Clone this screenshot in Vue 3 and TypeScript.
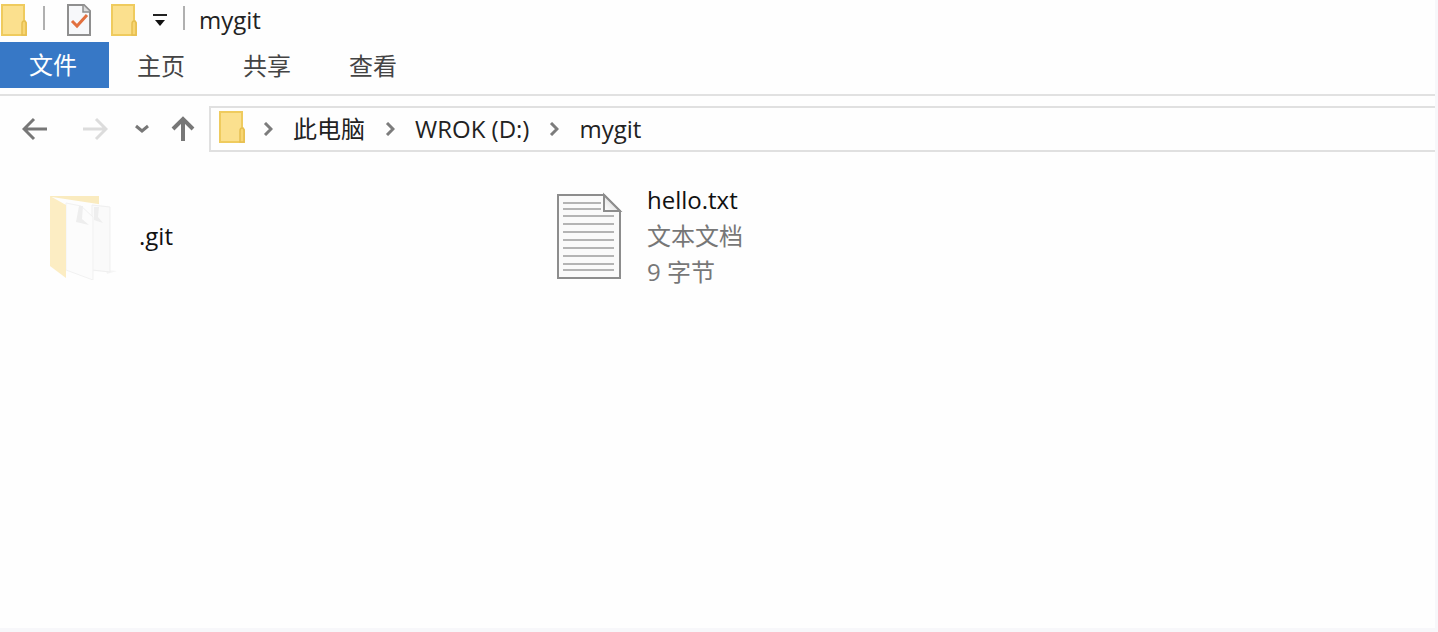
<script setup lang="ts">
const folderName: string = 'mygit'
const tabs: string[] = ['主页', '共享', '查看']
const crumbs: string[] = ['此电脑', 'WROK (D:)', folderName]
const docLines: number[] = [25, 33, 41, 49, 57, 65, 73].map((y) => y)
</script>

<template>
  <div class="window">
    <header class="titlebar">
      <svg class="folder" viewBox="0 0 28 34" aria-hidden="true">
        <path d="M2 2h22v15l2 3v12H2z" fill="#fbe08e" stroke="#efcb5e" stroke-width="2" />
        <path d="M22 32V21q0-3 2-3t2 3v11z" fill="#f8d672" stroke="#e6bf50" stroke-width="1.5" />
      </svg>
      <span class="bar bar-first"></span>
      <button class="tool" aria-label="属性">
        <svg width="26" height="34" viewBox="0 0 26 34">
          <path d="M2 2h16l6 6v24H2z" fill="#f7f8fa" stroke="#8f8f8f" stroke-width="2" />
          <path d="M17 2v7h7" fill="#dcdcdc" stroke="#8f8f8f" stroke-width="1.5" />
          <path d="M6 18l5 5 10-11" fill="none" stroke="#e2703f" stroke-width="3" />
        </svg>
      </button>
      <button class="tool new-folder" aria-label="新建文件夹">
        <svg class="folder" viewBox="0 0 28 34">
          <path d="M2 2h22v15l2 3v12H2z" fill="#fbe08e" stroke="#efcb5e" stroke-width="2" />
          <path d="M22 32V21q0-3 2-3t2 3v11z" fill="#f8d672" stroke="#e6bf50" stroke-width="1.5" />
        </svg>
      </button>
      <button class="tool customize" aria-label="自定义快速访问工具栏">
        <svg width="16" height="14" viewBox="0 0 16 14">
          <path d="M1 2h14" stroke="#222" stroke-width="2" />
          <path d="M3 7h10l-5 6z" fill="#111" />
        </svg>
      </button>
      <span class="bar bar-last"></span>
      <span class="title">{{ folderName }}</span>
    </header>

    <nav class="tabs">
      <button class="tab file-tab">文件</button>
      <button v-for="tab in tabs" :key="tab" class="tab">{{ tab }}</button>
    </nav>

    <div class="navigation">
      <div class="arrows">
        <button class="tool back" aria-label="后退">
          <svg width="26" height="24" viewBox="0 0 26 24" fill="none" stroke="#777" stroke-width="3">
            <path d="M25 12H3M12 2L2 12l10 10" />
          </svg>
        </button>
        <button class="tool forward" aria-label="前进" disabled>
          <svg width="26" height="24" viewBox="0 0 26 24" fill="none" stroke="#dcdcdc" stroke-width="3">
            <path d="M1 12h22M14 2l10 10-10 10" />
          </svg>
        </button>
        <button class="tool recent" aria-label="最近浏览的位置">
          <svg width="14" height="10" viewBox="0 0 14 10" fill="none" stroke="#777" stroke-width="3">
            <path d="M1 2l6 5 6-5" />
          </svg>
        </button>
        <button class="tool up" aria-label="上移">
          <svg width="24" height="26" viewBox="0 0 24 26" fill="none" stroke="#777" stroke-width="4">
            <path d="M12 25V3M2 13L12 3l10 10" />
          </svg>
        </button>
      </div>
      <div class="address">
        <svg class="folder" viewBox="0 0 28 34" aria-hidden="true">
          <path d="M2 2h22v15l2 3v12H2z" fill="#fbe08e" stroke="#efcb5e" stroke-width="2" />
          <path d="M22 32V21q0-3 2-3t2 3v11z" fill="#f8d672" stroke="#e6bf50" stroke-width="1.5" />
        </svg>
        <template v-for="crumb in crumbs" :key="crumb">
          <svg class="chevron" viewBox="0 0 10 14" fill="none" stroke="#7c7c7c" stroke-width="3">
            <path d="M2 1l6 6-6 6" />
          </svg>
          <button class="crumb">{{ crumb }}</button>
        </template>
      </div>
    </div>

    <main class="files">
      <article class="item">
        <svg class="icon" viewBox="0 0 72 88" aria-hidden="true">
          <path d="M2 4h49v70H18z" fill="#faebbf" />
          <path d="M4 5l46 7 12 2v66H18z" fill="#fdfdfd" />
          <path d="M58 78l11 1-10 3z" fill="#f5f5f5" />
          <path d="M44 13l18 2v65l-18-2z" fill="#fafafa" stroke="#efefef" />
          <path d="M18 11l15 3 12 11v63L18 78z" fill="#fcfcfc" stroke="#f1f1f1" />
          <path d="M31 14l4 0-1 13 7 6-13-3zM46 15l5 0-1 10 5 6-9-3z" fill="#eeeeee" />
          <path d="M2 4l16 9v73L2 74z" fill="#fcedc3" />
        </svg>
        <div class="text"><span class="name">.git</span></div>
      </article>
      <article class="item">
        <svg class="icon" viewBox="0 0 72 88" aria-hidden="true">
          <defs>
            <linearGradient id="fold" x1="0" y1="1" x2="1" y2="0">
              <stop offset="0" stop-color="#ffffff" />
              <stop offset="1" stop-color="#cfcfcf" />
            </linearGradient>
          </defs>
          <path d="M2 3h46l16 16v67H2z" fill="#fafafa" stroke="#8d8d8d" stroke-width="2" />
          <path d="M7 11h38M7 17h38" stroke="#b4b4b4" stroke-width="2" />
          <path
            v-for="y in docLines"
            :key="y"
            :d="`M7 ${y - 1}h51`"
            stroke="#b4b4b4"
            stroke-width="2"
          />
          <path d="M7 78h51" stroke="#b4b4b4" stroke-width="2" />
          <path d="M48 3v16h16z" fill="url(#fold)" stroke="#8d8d8d" stroke-width="2" />
        </svg>
        <div class="text">
          <span class="name">hello.txt</span>
          <span class="detail">文本文档</span>
          <span class="detail">9 字节</span>
        </div>
      </article>
    </main>
  </div>
</template>

<style>
body {
  margin: 0;
  background: #f7f7fa;
}
</style>

<style scoped>
.window {
  box-sizing: border-box;
  min-height: calc(100vh - 4px);
  margin: 0 3px 4px 0;
  background: #fefefe;
  color: #222;
  font: 24px/36px "Open Sans", "Noto Sans CJK SC", sans-serif;
}
button {
  padding: 0;
  border: 0;
  background: none;
  color: inherit;
  font: inherit;
}
svg {
  display: block;
  flex: none;
}
.titlebar {
  display: flex;
  align-items: center;
  height: 42px;
  box-sizing: border-box;
  padding-bottom: 2px;
}
.folder {
  width: 28px;
  height: 34px;
}
.bar {
  width: 2px;
  height: 24px;
  margin-bottom: 4px;
  background: #b0b0b0;
}
.bar-first {
  margin-left: 15px;
  margin-right: 21px;
}
.new-folder {
  margin-left: 18px;
}
.customize {
  margin-left: 14px;
}
.bar-last {
  margin-left: 15px;
  margin-right: 14px;
}
.tabs {
  display: flex;
  height: 52px;
  border-bottom: 2px solid #e1e1e1;
}
.tab {
  height: 46px;
  padding: 2px 30px 0 28px;
  color: #444;
}
.file-tab {
  padding: 0 32px 0 29px;
  background: #3778c6;
  color: #fff;
}
.navigation {
  display: flex;
  padding-top: 10px;
}
.arrows {
  display: flex;
  align-items: center;
  width: 187px;
  padding-left: 22px;
}
.forward {
  margin-left: 34px;
}
.recent {
  margin-left: 27px;
}
.up {
  margin-left: 22px;
}
.address {
  display: flex;
  flex: 1;
  align-items: center;
  height: 42px;
  padding-left: 7px;
  border: 2px solid #e0e0e0;
  border-right: 0;
}
.address .folder {
  margin-bottom: 4px;
}
.chevron {
  width: 10px;
  height: 14px;
  margin: 0 20px;
}
.folder + .chevron {
  margin-left: 17px;
}
.files {
  display: grid;
  grid-template-columns: repeat(auto-fill, 508px);
  padding: 30px 0 0 48px;
}
.item {
  display: flex;
  align-items: center;
  gap: 19px;
  min-height: 108px;
}
.icon {
  width: 72px;
  height: 88px;
}
.text {
  display: flex;
  flex-direction: column;
}
.name {
  color: #111;
}
.detail {
  color: #777;
}
</style>
